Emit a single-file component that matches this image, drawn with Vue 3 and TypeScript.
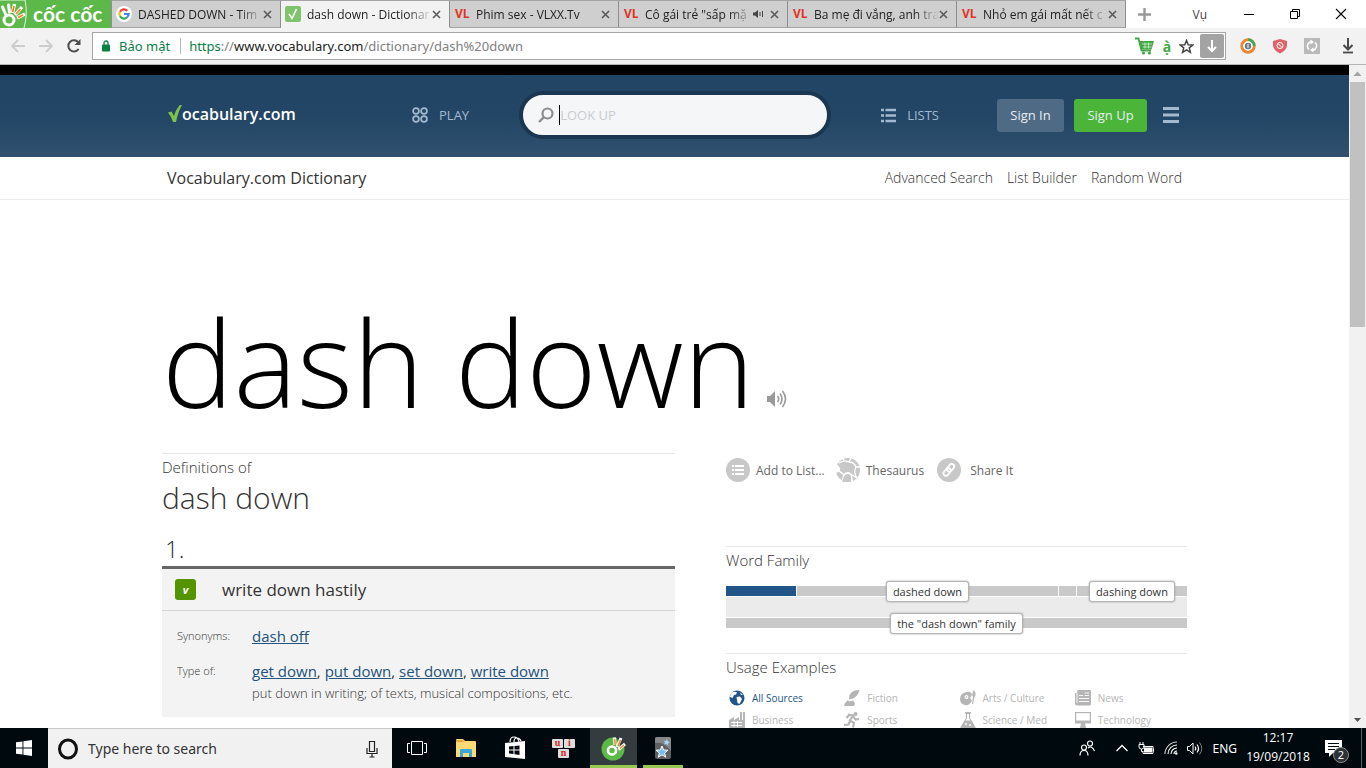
<script setup lang="ts">
interface Tab {
  title: string
  icon: 'google' | 'vocab' | 'vl'
  active?: boolean
  audible?: boolean
}

interface Source {
  label: string
  icon: string
  active?: boolean
}

const tabs: Tab[] = [
  { title: 'DASHED DOWN - Tim', icon: 'google' },
  { title: 'dash down - Dictionar', icon: 'vocab', active: true },
  { title: 'Phim sex - VLXX.Tv', icon: 'vl' },
  { title: 'Cô gái trẻ "sấp mặ', icon: 'vl', audible: true },
  { title: 'Ba mẹ đi vắng, anh tra', icon: 'vl' },
  { title: 'Nhỏ em gái mất nết c', icon: 'vl' },
]

const typeLinks: string[] = ['get down', 'put down', 'set down', 'write down']

const sources: Source[] = [
  { label: 'All Sources', icon: 'globe', active: true },
  { label: 'Fiction', icon: 'quill' },
  { label: 'Arts / Culture', icon: 'palette' },
  { label: 'News', icon: 'news' },
  { label: 'Business', icon: 'factory' },
  { label: 'Sports', icon: 'runner' },
  { label: 'Science / Med', icon: 'flask' },
  { label: 'Technology', icon: 'screen' },
]

const family = [
  { label: '', weight: 70, current: true },
  { label: 'dashed down', weight: 261, current: false },
  { label: '', weight: 17, current: false },
  { label: 'dashing down', weight: 110, current: false },
]
</script>

<template>
  <div class="desktop">
    <header class="tabstrip">
      <div class="brand">
        <svg width="28" height="28" viewBox="0 0 28 28" aria-hidden="true">
          <path d="M0 0H25Q28 14 24 28" fill="none" stroke="#e4f6de" stroke-width="1" />
          <circle cx="9" cy="20" r="5" fill="none" stroke="#fff" stroke-width="3" />
          <path d="M2.500 7 5.500 14M8.500 5 9.500 12" stroke="#fff" stroke-width="3" stroke-linecap="round" />
          <path d="M12.500 13 14.500 4M15 15 22 7M17 18 25 14" stroke="#fff" stroke-width="3.400" />
          <path d="M12.700 12 14 6M16 14 20.500 9M18 17.500 23 15" stroke="#f58229" stroke-width="1.800" />
        </svg>
        <span>cốc cốc</span>
      </div>
      <nav class="tabs" aria-label="Tabs">
        <div v-for="tab in tabs" :key="tab.title" class="tab" :class="{ active: tab.active }">
          <svg v-if="tab.icon === 'google'" width="16" height="16" viewBox="0 0 16 16" aria-hidden="true">
            <circle cx="8" cy="8" r="8" fill="#fff" />
            <g fill="none" stroke-width="2.200">
              <path d="M11.300 4.700A4.600 4.600 0 0 0 4 5.700" stroke="#ea4335" />
              <path d="M4 5.700A4.600 4.600 0 0 0 4 10.300" stroke="#fbbc05" />
              <path d="M4 10.300A4.600 4.600 0 0 0 10.900 11.500" stroke="#34a853" />
              <path d="M10.900 11.500A4.600 4.600 0 0 0 12.600 8H8" stroke="#4285f4" />
            </g>
          </svg>
          <svg v-else-if="tab.icon === 'vocab'" width="16" height="16" viewBox="0 0 16 16" aria-hidden="true">
            <rect width="16" height="16" rx="2" fill="#7fc46c" />
            <path d="M4 8 7 12.500 11.500 3" fill="none" stroke="#fff" stroke-width="1.600" />
          </svg>
          <span v-else class="vl" aria-hidden="true">VL</span>
          <a class="tab-title" href="#">{{ tab.title }}</a>
          <svg v-if="tab.audible" class="sound" width="11" height="10" viewBox="0 0 11 10" aria-hidden="true">
            <path d="M0 3.500H2L5 1V9L2 6.500H0Z" fill="#444" />
            <path d="M7 3V7M9.500 2V8" stroke="#444" stroke-width="1" />
          </svg>
          <button class="tab-close" aria-label="Close tab">
            <svg width="9" height="9" viewBox="0 0 9 9"><path d="M1 1 8 8M8 1 1 8" stroke="#5a5a5a" stroke-width="1.600" /></svg>
          </button>
        </div>
      </nav>
      <button class="new-tab" aria-label="New tab">
        <svg width="13" height="13" viewBox="0 0 13 13"><path d="M6.500 0V13M0 6.500H13" stroke="#999" stroke-width="2.400" /></svg>
      </button>
      <div class="window-tools">
        <span class="profile">Vụ</span>
        <button aria-label="Minimize"><svg width="12" height="12" viewBox="0 0 12 12"><path d="M1 6.500H11" stroke="#000" /></svg></button>
        <button aria-label="Restore"><svg width="12" height="12" viewBox="0 0 12 12"><path d="M1.500 3.500H8.500V10.500H1.500ZM3.500 3V1.500H10.500V8.500H9" fill="none" stroke="#000" /></svg></button>
        <button aria-label="Close"><svg width="12" height="12" viewBox="0 0 12 12"><path d="M1 1 11 11M11 1 1 11" stroke="#000" stroke-width="1.100" /></svg></button>
      </div>
    </header>

    <div class="toolbar">
      <div class="nav-buttons">
        <button aria-label="Back"><svg width="16" height="16" viewBox="0 0 16 16"><path d="M15 8H2M8 2 2 8 8 14" fill="none" stroke="#cdcdcd" stroke-width="1.800" /></svg></button>
        <button aria-label="Forward"><svg width="16" height="16" viewBox="0 0 16 16"><path d="M1 8H14M8 2 14 8 8 14" fill="none" stroke="#cdcdcd" stroke-width="1.800" /></svg></button>
        <button aria-label="Reload"><svg width="16" height="16" viewBox="0 0 16 16"><path d="M12.600 11A5.600 5.600 0 1 1 12.200 4.200" fill="none" stroke="#4d4d4d" stroke-width="2" /><path d="M14.500 1V7H8.500Z" fill="#4d4d4d" /></svg></button>
      </div>
      <div class="omnibox">
        <svg width="8" height="12" viewBox="0 0 8 12" aria-hidden="true"><path d="M2 5V3A2 2 0 0 1 6 3V5" fill="none" stroke="#0b8043" stroke-width="1.300" /><rect y="4.500" width="8" height="7" rx="1" fill="#0b8043" /></svg>
        <span class="secure">Bảo mật</span>
        <div class="url" role="textbox" aria-label="Address" contenteditable="true" spellcheck="false"><span class="scheme">https</span>://<span class="host">www.vocabulary.com</span>/dictionary/dash%20down</div>
        <button aria-label="Shopping"><svg width="20" height="18" viewBox="0 0 20 18"><path d="M0 1.500H3.500L6.500 13.500H16" fill="none" stroke="#43a847" stroke-width="1.800" /><path d="M4 4H19L16.500 12.500H6.500Z" fill="#43a847" /><path d="M7 7H17M8 10H16.500M10 5.500V11.500M13.500 5.500V11.500" stroke="#d8f0d5" stroke-width="0.800" /><circle cx="8.500" cy="16" r="1.600" fill="#43a847" /><circle cx="14.500" cy="16" r="1.600" fill="#43a847" /></svg></button>
        <button class="accent" aria-label="Vietnamese typing">ạ̀</button>
        <button aria-label="Bookmark"><svg width="15" height="15" viewBox="0 0 15 15"><path d="M7.500 1.500 9.200 5.700 13.800 6 10.300 8.900 11.400 13.300 7.500 10.900 3.600 13.300 4.700 8.900 1.200 6 5.800 5.700Z" fill="none" stroke="#444" stroke-width="1.500" /></svg></button>
        <button class="save" aria-label="Save media"><svg width="14" height="14" viewBox="0 0 14 14"><path d="M7 1V12M3 8 7 12 11 8" fill="none" stroke="#fff" stroke-width="2" /></svg></button>
      </div>
      <div class="extensions">
        <button aria-label="Savior"><svg width="16" height="16" viewBox="0 0 16 16"><circle cx="8" cy="8" r="6.200" fill="none" stroke="#f0852d" stroke-width="3" /><path d="M8 1.800A6.200 6.200 0 0 1 14.200 8" fill="none" stroke="#4aa657" stroke-width="3" /><circle cx="8" cy="8" r="4.700" fill="#fff" /><circle cx="8" cy="8" r="3.200" fill="#6f7b86" /><path d="M8 6V10" stroke="#fff" /></svg></button>
        <button aria-label="Ad shield"><svg width="14" height="16" viewBox="0 0 14 16"><path d="M7 1 14 3V8Q13 13 7 15.500 1 13 0 8V3Z" fill="#e0626b" /><circle cx="7" cy="7.500" r="3" fill="none" stroke="#fff" /><path d="M5 5.500 9 9.500" stroke="#fff" /></svg></button>
        <button aria-label="Sync"><svg width="16" height="16" viewBox="0 0 16 16"><rect width="16" height="16" fill="#b9b9b9" /><path d="M5 11.500A4.400 4.400 0 0 1 7 3.800M11 4.500A4.400 4.400 0 0 1 9 12.200" fill="none" stroke="#fff" stroke-width="1.500" /><path d="M6.500 1.500 10 4 6.500 6.500ZM9.500 9.500 6 12 9.500 14.500Z" fill="#fff" /></svg></button>
        <button class="downloads" aria-label="Downloads"><svg width="12" height="16" viewBox="0 0 12 16"><path d="M6 0V11M1.500 7 6 11.500 10.500 7" fill="none" stroke="#4a4a4a" stroke-width="2" /><path d="M1 14.500H11" stroke="#4a4a4a" stroke-width="1.800" /></svg></button>
      </div>
    </div>

    <div class="browser-body">
      <main class="page">
        <div class="site-header">
          <div class="container header-row">
            <a class="logo" href="#" aria-label="Vocabulary.com">
              <svg width="14" height="18" viewBox="0 0 14 18" aria-hidden="true"><path d="M0 7.500 3.500 6.500 6 11Q8 4 12 0H14Q10 7 8 17H5Q3 11 0 7.500Z" fill="#7cc24b" /></svg>
              <span>ocabulary.com</span>
            </a>
            <a class="menu-link play" href="#">
              <svg width="16" height="16" viewBox="0 0 16 16" aria-hidden="true"><g fill="none" stroke="#a3b9d0" stroke-width="1.700"><circle cx="4" cy="4" r="2.900" /><circle cx="12" cy="4" r="2.900" /><circle cx="4" cy="12" r="2.900" /><circle cx="12" cy="12" r="2.900" /></g></svg>
              PLAY
            </a>
            <label class="search">
              <svg width="16" height="16" viewBox="0 0 16 16" aria-hidden="true"><circle cx="9.500" cy="6.500" r="5" fill="none" stroke="#8c8c8c" stroke-width="2.200" /><path d="M6 10 1 15" stroke="#8c8c8c" stroke-width="2.400" /></svg>
              <span class="caret"></span>
              <input type="text" placeholder="LOOK UP" aria-label="Look up a word" />
            </label>
            <a class="menu-link lists" href="#">
              <svg width="15" height="15" viewBox="0 0 15 15" aria-hidden="true"><path d="M0 2H3M0 7.500H3M0 13H3M4.500 2H15M4.500 7.500H15M4.500 13H15" stroke="#a3b9d0" stroke-width="2.400" /></svg>
              LISTS
            </a>
            <button class="sign in">Sign In</button>
            <button class="sign up">Sign Up</button>
            <button class="burger" aria-label="Menu"><svg width="16" height="16" viewBox="0 0 16 16"><path d="M0 1.500H16M0 8H16M0 14.500H16" stroke="#a3b9d0" stroke-width="3" /></svg></button>
          </div>
        </div>

        <div class="subheader">
          <div class="container sub-row">
            <a class="section" href="#">Vocabulary.com Dictionary</a>
            <nav class="sub-links">
              <a href="#">Advanced Search</a>
              <a href="#">List Builder</a>
              <a href="#">Random Word</a>
            </nav>
          </div>
        </div>

        <div class="container">
          <h1 class="headword">
            dash down
            <button aria-label="Listen"><svg width="20" height="18" viewBox="0 0 20 18"><path d="M0 6H3L8 1V17L3 12H0Z" fill="#999" /><path d="M10.500 6Q13 9 10.500 12M13 3.500Q17 9 13 14.500M15.500 1Q21.500 9 15.500 17" fill="none" stroke="#999" stroke-width="1.600" /></svg></button>
          </h1>
          <div class="columns">
            <section class="definitions">
              <h2><span>Definitions of</span>dash down</h2>
              <h3 class="number">1.</h3>
              <div class="sense">
                <div class="sense-head">
                  <a class="pos" href="#" title="verb">v</a>
                  <span>write down hastily</span>
                </div>
                <dl class="instances">
                  <dt>Synonyms:</dt>
                  <dd><a href="#">dash off</a></dd>
                  <dt>Type of:</dt>
                  <dd>
                    <template v-for="(link, i) in typeLinks" :key="link"><span v-if="i > 0">, </span><a href="#">{{ link }}</a></template>
                    <p>put down in writing; of texts, musical compositions, etc.</p>
                  </dd>
                </dl>
              </div>
            </section>

            <aside class="side">
              <div class="actions">
                <a href="#">
                  <svg width="24" height="24" viewBox="0 0 24 24" aria-hidden="true"><circle cx="12" cy="12" r="12" fill="#c8c8c8" /><path d="M6 8H8M6 12H8M6 16H8M9 8H18M9 12H18M9 16H18" stroke="#fff" stroke-width="2" /></svg>
                  Add to List...
                </a>
                <a href="#">
                  <svg width="24" height="24" viewBox="0 0 24 24" aria-hidden="true"><circle cx="12" cy="12" r="12" fill="#c8c8c8" /><path d="M0 6Q5 9 4 13L0 15V6ZM7 16Q12 12 16 16L17 24H5Q7 20 7 16Z" fill="#fff" /><path d="M8 18Q12 14 15 18V24H6Z" fill="#c8c8c8" /><g fill="none" stroke="#fff" stroke-width="1.300"><path d="M3 5Q8 2 13 4L15 0M13 4Q18 4 20 9 17 15 21 20M20 9 24 9M0 12Q4 13 7 16M7 0 8 3M16 17 21 20" /></g></svg>
                  Thesaurus
                </a>
                <a href="#" class="share">
                  <svg width="24" height="24" viewBox="0 0 24 24" aria-hidden="true"><circle cx="12" cy="12" r="12" fill="#c8c8c8" /><g fill="none" stroke="#fff" stroke-width="1.800" transform="rotate(-50 12 12)"><rect x="5" y="9.300" width="8.500" height="5" rx="2.500" /><rect x="10.500" y="9.300" width="8.500" height="5" rx="2.500" /></g></svg>
                  Share It
                </a>
              </div>

              <section class="word-family">
                <h4>Word Family</h4>
                <div class="bar">
                  <div v-for="(part, i) in family" :key="i" class="segment" :class="{ current: part.current }" :style="{ flexGrow: part.weight }">
                    <a v-if="part.label" class="pill" href="#">{{ part.label }}</a>
                  </div>
                </div>
                <div class="spacer"></div>
                <div class="bar"><div class="segment whole"><a class="pill" href="#">the "dash down" family</a></div></div>
              </section>

              <section class="usage">
                <h4>Usage Examples</h4>
                <div class="sources">
                  <a v-for="source in sources" :key="source.label" href="#" :class="{ selected: source.active }">
                    <svg width="16" height="16" viewBox="0 0 16 16" fill="currentColor" aria-hidden="true">
                      <template v-if="source.icon === 'globe'"><circle cx="8" cy="8" r="7.500" /><path d="M3 2.500Q6 1 8 2.500L7 4.500 5 5 3.500 8 1 7Q1 4 3 2.500ZM7.500 7 11 6.500 13 9 10.500 14 8.500 13ZM11 2.500 14 5 12 5Z" fill="#fff" /></template>
                      <path v-else-if="source.icon === 'quill'" d="M15.500 0Q8 0 5.500 5L5 9.500 9 8.500Q14 6 15.500 0ZM0 16Q1 12 4 10L5 11.500 9 10.500 11 13.500 10 16Z" />
                      <template v-else-if="source.icon === 'palette'"><path d="M7 2Q11 1 12 5L10 8 12 11Q9 16 5 15 0 14 0 9 0 3 7 2Z" /><circle cx="6.500" cy="7" r="2" fill="#fff" /><circle cx="6.500" cy="7" r="0.800" /><path d="M14 0Q17 4 14.500 7L13 14H12L13 7Q11 4 14 0Z" /></template>
                      <template v-else-if="source.icon === 'news'"><path d="M2.500 0H15Q16 0 16 1V14Q16 15.500 14.500 15.500H2Q0 15.500 0 13.500V3H2Z" /><path d="M4 5.500H8M9.500 3H14M9.500 5.500H14M4 8.500H14M4 11.500H14M2 3V13" stroke="#fff" stroke-width="0.900" /></template>
                      <template v-else-if="source.icon === 'factory'"><path d="M0 16V8L5 5V8L10 5V8H11V0H13V8H14V0H16V16Z" /><path d="M2 10.500H13M2 13.500H13M5 9V15M8.500 9V15" stroke="#fff" stroke-width="0.900" /></template>
                      <template v-else-if="source.icon === 'runner'"><circle cx="11.500" cy="2" r="2" /><path d="M4 2.500 9 3.500 6 8.500 10 11 9 15.500M9 4 11.500 7.500 15 7M6 9 4.500 12.500 0 13M5 3 2.500 6" fill="none" stroke="currentColor" stroke-width="2.100" /></template>
                      <template v-else-if="source.icon === 'flask'"><path d="M5 0H11V1.500H10V6L15.500 15Q16 16 15 16H1Q0 16 0.500 15L6 6V1.500H5Z" /><path d="M7 2H9V6L10.500 8.500H5.500L7 6Z" fill="#fff" /><circle cx="6" cy="12" r="0.900" fill="#fff" /><circle cx="10" cy="13" r="0.900" fill="#fff" /></template>
                      <template v-else><path d="M0 0H16V11.500H10L11 16H5L6 11.500H0Z" /><path d="M1.200 1.200H14.800V8.500H1.200Z" fill="#fff" /></template>
                    </svg>
                    {{ source.label }}
                  </a>
                </div>
              </section>
            </aside>
          </div>
        </div>
      </main>
      <div class="scrollbar" aria-hidden="true">
        <svg width="17" height="17" viewBox="0 0 17 17"><path d="M4.500 11 8.500 6.500 12.500 11Z" fill="#a3a3a3" /></svg>
        <div class="track"><div class="thumb"></div></div>
        <svg width="17" height="17" viewBox="0 0 17 17"><path d="M5 7H12L8.500 11Z" fill="#505050" /></svg>
      </div>
    </div>

    <footer class="taskbar">
      <button class="start" aria-label="Start"><svg width="16" height="16" viewBox="0 0 16 16"><path d="M0 2.300 6.500 1.400V7.600H0ZM7.400 1.300 16 0V7.600H7.400ZM0 8.400H6.500V14.600L0 13.700ZM7.400 8.400H16V16L7.400 14.700Z" fill="#fff" /></svg></button>
      <label class="task-search">
        <svg width="20" height="22" viewBox="0 0 20 22" aria-hidden="true"><ellipse cx="10" cy="11" rx="8.500" ry="9" fill="none" stroke="#111" stroke-width="3" /></svg>
        <input type="text" placeholder="Type here to search" aria-label="Type here to search" />
        <svg width="12" height="18" viewBox="0 0 12 18" aria-hidden="true"><path d="M3.500 1.500H8.500V11.500H3.500ZM1 8V13.500H11V8M6 14V16.500M3.500 17H8.500" fill="none" stroke="#222" stroke-width="1.200" /></svg>
      </label>
      <div class="apps">
        <button aria-label="Task view"><svg width="20" height="16" viewBox="0 0 20 16"><path d="M4.500 1.500H15.500V14.500H4.500ZM3 3.500H0.500V12.500H3M17 3.500H19.500V12.500H17" fill="none" stroke="#fff" /></svg></button>
        <button aria-label="File Explorer"><svg width="22" height="20" viewBox="0 0 22 20"><path d="M1 2Q1 1 2 1H8L10 3H20Q21 3 21 4V19H1Z" fill="#fbd975" /><path d="M1 2H8L9 4H1Z" fill="#e8a93a" /><path d="M5 19V12Q5 11 6 11H16Q17 11 17 12V19H14V15H8V19Z" fill="#3aa7dc" /></svg></button>
        <button aria-label="Store"><svg width="22" height="24" viewBox="0 0 22 24"><path d="M1 7 21 5V23L1 21Z" fill="#fff" /><path d="M6 6Q6 1 10 1T15 6M10 6Q10 2 12.500 2 16 2 17 5" fill="none" stroke="#fff" stroke-width="1.200" /><path d="M5 10.500 9.500 10V13.500H5ZM10.500 10 15.500 9.500V13.500H10.500ZM5 14.500H9.500V18L5 17.500ZM10.500 14.500H15.500V19L10.500 18.200Z" fill="#00090d" /></svg></button>
        <button class="keys" aria-label="UniKey"><b>u</b><b>i</b><b>n</b></button>
        <button class="running" aria-label="Cốc Cốc"><svg width="25" height="25" viewBox="0 0 25 25"><circle cx="12" cy="13" r="11.500" fill="#5cb848" /><path d="M15 0H25V12L19 10Z" fill="#343c40" /><circle cx="11" cy="14.500" r="4" fill="none" stroke="#fff" stroke-width="2.600" /><path d="M13.500 1.500 14 9M16 11 20 2M17.500 13.500 24 8" stroke="#fff" stroke-width="3" /><path d="M13.700 3 14.200 9M17 10 19.500 4M19 12.500 23 9" stroke="#f58229" stroke-width="1.500" /></svg></button>
        <button class="anki" aria-label="Anki"><svg width="18" height="22" viewBox="0 0 18 22"><rect x="1" width="16" height="22" rx="2" fill="#5e6062" /><path d="M1 6Q10 4 17 14V2Q17 0 15 0H3Q1 0 1 2Z" fill="#85888a" /><path d="M8 9 9.600 13 14 13.200 10.600 16 11.800 20.200 8 17.800 4.200 20.200 5.400 16 2 13.200 6.400 13Z" fill="#78bdf0" stroke="#fff" /><path d="M13 2 13.800 4.200 16 5 14 6.500 14 8.500 12.300 7 10 7.500 11 5.500 10 3.500 12 4Z" fill="#a9d5f5" /></svg></button>
      </div>
      <div class="tray">
        <button aria-label="People"><svg width="16" height="16" viewBox="0 0 16 16"><g fill="none" stroke="#fff" stroke-width="1.200"><circle cx="5" cy="7.500" r="2.500" /><path d="M1 15.500Q1 10.500 5 10.500T9 15.500" /><circle cx="11" cy="3.500" r="2.500" /><path d="M9 8Q13 5 15.500 11" /></g></svg></button>
        <button aria-label="Show hidden icons"><svg width="14" height="8" viewBox="0 0 14 8"><path d="M1.500 7 7 1.500 12.500 7" fill="none" stroke="#fff" stroke-width="1.300" /></svg></button>
        <button aria-label="Battery"><svg width="17" height="13" viewBox="0 0 17 13"><path d="M5 4.500H15V11.500H5V9M15.500 6.500V9.500M1 2.500H6V5Q6 7 3.500 7T1 5ZM2 0V2M5 0V2M3.500 7V9.500H5" fill="none" stroke="#fff" /><rect x="6" y="5.500" width="8" height="5" fill="#fff" /></svg></button>
        <button aria-label="Network"><svg width="14" height="14" viewBox="0 0 14 14"><g fill="none" stroke="#ccc" stroke-width="1.100"><path d="M1 13A12 12 0 0 1 13 1" /><path d="M4 13A9 9 0 0 1 13 4M7 13A6 6 0 0 1 13 7M10 13A3 3 0 0 1 13 10" stroke="#fff" /></g><circle cx="12.300" cy="12.500" r="1.200" fill="#fff" /></svg></button>
        <button aria-label="Volume"><svg width="16" height="13" viewBox="0 0 16 13"><path d="M0.500 4.500H2.500L6 1V12L2.500 8.500H0.500Z" fill="none" stroke="#fff" /><path d="M8 4.500Q9.500 6.500 8 8.500M10 2.500Q13 6.500 10 10.500" fill="none" stroke="#fff" stroke-width="1.200" /><path d="M12.500 0.500Q17 6.500 12.500 12.500" fill="none" stroke="#7a8588" /></svg></button>
        <button class="language">ENG</button>
        <button class="clock"><time>12:17</time><time>19/09/2018</time></button>
        <button class="notices" aria-label="Notifications, 2 new">
          <svg width="17" height="17" viewBox="0 0 17 17"><path d="M0 0H17V13H8L4 17V13H0Z" fill="#fff" /><path d="M3 3.500H14M3 6.500H14M3 9.500H10" stroke="#00090d" /></svg>
          <span>2</span>
        </button>
        <i class="peek"></i>
      </div>
    </footer>
  </div>
</template>

<style>
html,
body {
  margin: 0;
  overflow: hidden;
}
</style>

<style scoped>
.desktop,
.desktop * {
  box-sizing: border-box;
}
.desktop {
  display: flex;
  flex-direction: column;
  height: 100vh;
  overflow: hidden;
  background: #fff;
  font-family: 'Open Sans', 'Noto Sans', sans-serif;
}
button {
  display: inline-flex;
  align-items: center;
  justify-content: center;
  padding: 0;
  border: 0;
  background: none;
  color: inherit;
  font: inherit;
}
input {
  min-width: 0;
  padding: 0;
  border: 0;
  outline: 0;
  background: none;
  font: inherit;
}
a {
  color: inherit;
  text-decoration: none;
}
svg {
  flex: none;
}
h1,
h2,
h3,
h4,
p,
dl,
dd {
  margin: 0;
  font-weight: 300;
}

/* Tab strip */
.tabstrip {
  display: flex;
  flex: none;
  height: 28px;
}
.brand {
  display: flex;
  flex: none;
  align-items: center;
  gap: 5px;
  width: 111px;
  background: #5cb848;
  color: #fff;
  font: 700 21px/24px Lato, sans-serif;
  white-space: nowrap;
}
.tabs {
  display: flex;
  flex: 0 1 1015px;
  min-width: 0;
  border-top: 1px solid #a3a3a3;
  border-left: 1px solid #8e8e8e;
}
.tab {
  display: flex;
  flex: 1 1 0;
  align-items: center;
  min-width: 0;
  padding: 0 8px 0 4px;
  border-right: 1px solid #8e8e8e;
  border-bottom: 1px solid #a3a3a3;
  background: #cfcfcf;
  color: #222;
  font-size: 12px;
}
.tab.active {
  border-bottom-color: #f2f2f2;
  background: #f2f2f2;
}
.vl {
  width: 16px;
  padding-left: 1px;
  color: #e03427;
  font: 700 12px/16px 'Open Sans', sans-serif;
}
.tab-title {
  flex: 1;
  min-width: 0;
  padding-left: 6px;
  overflow: hidden;
  white-space: nowrap;
  mask-image: linear-gradient(to right, #000 calc(100% - 24px), transparent);
}
.sound {
  margin-right: 6px;
}
.tab-close {
  width: 9px;
  height: 16px;
}
.new-tab {
  flex: none;
  width: 36px;
}
.window-tools {
  display: flex;
  flex: none;
  align-items: center;
  margin-left: auto;
  font-size: 11px;
}
.window-tools button {
  width: 46px;
  height: 28px;
}
.window-tools .profile {
  margin-right: 19px;
  color: #444;
  font-size: 12px;
}
.window-tools button:last-child {
  margin-right: 2px;
}

/* Toolbar */
.toolbar {
  display: flex;
  flex: none;
  align-items: center;
  height: 37px;
  border-bottom: 1px solid #b4b4b4;
  background: #f2f2f2;
  font-family: 'Noto Sans', 'Open Sans', sans-serif;
}
.nav-buttons {
  display: flex;
  gap: 12px;
  padding: 0 10px;
}
.omnibox {
  display: flex;
  flex: 1;
  align-items: center;
  min-width: 0;
  height: 28px;
  padding: 0 1px 0 9px;
  border: 1px solid #a6a6a6;
  background: #fff;
  font-size: 14px;
}
.secure {
  margin-left: 9px;
  padding-right: 10px;
  border-right: 1px solid #b9b9b9;
  color: #0b8043;
  font-size: 13px;
  line-height: 16px;
}
.url {
  flex: 1;
  min-width: 0;
  margin-left: 8px;
  overflow: hidden;
  color: #808080;
  font-size: 13px;
  white-space: nowrap;
}
.scheme {
  color: #0b8043;
}
.host {
  color: #222;
}
.accent {
  width: 24px;
  color: #43a847;
  font-weight: 700;
}
.save {
  width: 24px;
  height: 24px;
  margin-left: 6px;
  border-radius: 2px;
  background: #a3a3a3;
}
.extensions {
  display: flex;
  align-items: center;
  gap: 17px;
  padding: 0 12px 0 14px;
}
.downloads {
  margin-left: 5px;
}

/* Page */
.browser-body {
  display: flex;
  flex: 1;
  min-height: 0;
}
.page {
  flex: 1;
  min-width: 0;
  overflow: hidden;
}
.container {
  width: 76%;
  max-width: 1025px;
  margin: 0 auto;
}
.site-header {
  border-top: 10px solid #000;
  background: linear-gradient(#224566 0%, #234666 50%, #30506e 100%);
}
.header-row {
  display: flex;
  align-items: center;
  height: 82px;
  padding: 0 8px 2px 6px;
  color: #a3b9d0;
  font-size: 13px;
}
.logo {
  display: flex;
  align-items: center;
  padding-bottom: 2px;
  color: #fff;
  font-size: 16px;
  font-weight: 600;
}
.menu-link {
  display: flex;
  align-items: center;
  gap: 11px;
}
.play {
  margin-left: auto;
}
.search {
  display: flex;
  flex: 0 1 312px;
  align-items: center;
  min-width: 0;
  height: 48px;
  margin: 0 50px;
  padding: 0 15px;
  border: 4px solid #1a3650;
  border-radius: 24px;
  background: #f4f6f8;
}
.search input {
  flex: 1;
}
.search input::placeholder {
  color: #c9ccd0;
  opacity: 1;
}
.caret {
  width: 1px;
  height: 20px;
  margin-left: 5px;
  background: #000;
}
.sign {
  height: 33px;
  border-radius: 3px;
  color: #e8edf2;
}
.sign.in {
  width: 67px;
  margin-left: 58px;
  background: #4f6a84;
}
.sign.up {
  width: 73px;
  margin-left: 10px;
  background: #4bb53a;
}
.burger {
  margin-left: 16px;
}
.subheader {
  border-bottom: 1px solid #ececec;
}
.sub-row {
  display: flex;
  align-items: center;
  justify-content: space-between;
  height: 42px;
  padding: 0 5px;
  color: #333;
}
.section {
  font-size: 16px;
}
.sub-links {
  display: flex;
  gap: 14px;
  padding-bottom: 2px;
  font-size: 14px;
  font-weight: 300;
}
.headword {
  display: flex;
  align-items: flex-end;
  gap: 13px;
  margin: 102px 0 31px;
  color: #000;
  font-size: 120px;
  line-height: 120px;
}
.headword button {
  padding-bottom: 14px;
}
.columns {
  display: flex;
  gap: 51px;
}
.definitions {
  flex: 513 1 0;
  min-width: 0;
  padding-top: 3px;
  border-top: 1px solid #e6e6e6;
  color: #333;
}
.definitions h2 {
  font-size: 30px;
  line-height: 41px;
}
.definitions h2 span {
  display: block;
  font-size: 15px;
  line-height: 20px;
}
.number {
  margin-top: 16px;
  padding: 0 3px 2px;
  font-size: 24px;
  line-height: 30px;
}
.sense {
  border-top: 3px solid #666;
  background: #f3f3f3;
}
.sense-head {
  display: flex;
  align-items: center;
  gap: 26px;
  height: 42px;
  padding: 0 13px;
  border-bottom: 1px solid #d6d6d6;
  font-size: 17px;
}
.pos {
  width: 21px;
  height: 21px;
  border-radius: 3px;
  background: #549400;
  color: #fff;
  font-size: 11px;
  font-style: italic;
  font-weight: 700;
  line-height: 21px;
  text-align: center;
}
.instances {
  display: grid;
  grid-template-columns: 75px 1fr;
  row-gap: 13px;
  padding: 14px 15px 13px;
  font-size: 15px;
  line-height: 22px;
}
.instances dt {
  font-size: 11px;
  font-weight: 300;
}
.instances dd {
  font-weight: 400;
}
.instances a {
  color: #23527c;
  text-decoration: underline;
}
.instances p {
  font-size: 13px;
}

.side {
  flex: 461 1 0;
  min-width: 0;
  padding-top: 5px;
  color: #333;
}
.actions {
  display: flex;
  gap: 11px;
  color: #666;
  font-size: 12px;
}
.actions a {
  display: flex;
  align-items: center;
  gap: 6px;
}
.actions .share {
  gap: 9px;
  margin-left: 2px;
}
.side h4 {
  font-size: 15px;
  line-height: 20px;
}
.word-family {
  margin-top: 64px;
  padding-top: 3px;
  border-top: 1px solid #e6e6e6;
}
.bar {
  display: flex;
  gap: 1px;
  height: 10px;
  margin-top: 16px;
}
.segment {
  display: flex;
  flex: 1 1 0;
  align-items: center;
  justify-content: center;
  background: #c9c9c9;
}
.segment.current {
  background: #225588;
}
.pill {
  flex: none;
  padding: 0 6px;
  border: 1px solid #b4b4b4;
  border-radius: 3px;
  background: #fff;
  box-shadow: 0 0 2px #999;
  color: #333;
  font-size: 11px;
  line-height: 19px;
  position: relative;
}
.spacer {
  height: 20px;
  margin-top: 1px;
  background: #ebebeb;
}
.spacer + .bar {
  margin-top: 1px;
}
.usage {
  margin-top: 25px;
  padding-top: 3px;
  border-top: 1px solid #e6e6e6;
}
.sources {
  display: grid;
  grid-template-columns: repeat(4, 1fr);
  margin: 10px -3px 0 3px;
  color: #b5b5b5;
  font-size: 10px;
  line-height: 22px;
}
.sources a {
  display: flex;
  align-items: center;
  gap: 7px;
  white-space: nowrap;
}
.sources .selected {
  color: #225588;
}

.scrollbar {
  display: flex;
  flex: none;
  flex-direction: column;
  width: 17px;
  background: #f1f1f1;
}
.track {
  flex: 1;
  padding: 0 1px;
}
.thumb {
  height: 39%;
  background: #c1c1c1;
}

/* Taskbar */
.taskbar {
  display: flex;
  flex: none;
  height: 40px;
  background: #00090d;
  color: #fff;
  font-family: 'Noto Sans', 'Open Sans', sans-serif;
}
.start {
  width: 48px;
}
.task-search {
  display: flex;
  flex: 0 1 344px;
  align-items: center;
  gap: 10px;
  min-width: 0;
  padding: 0 14px 0 10px;
  border-top: 1px solid #c8c8c8;
  background: #f1f1f1;
  font-size: 14px;
}
.task-search input {
  flex: 1;
}
.task-search input::placeholder {
  color: #333;
  opacity: 1;
}
.apps {
  display: flex;
}
.apps button {
  width: 49px;
}
.apps .running {
  width: 47px;
  margin-left: 2px;
  border-top: 3px solid transparent;
  border-bottom: 3px solid #96c950;
  background: #343c40;
}
.apps .anki {
  width: 40px;
  margin-left: 6px;
  border-top: 3px solid transparent;
  border-bottom: 3px solid #96c950;
}
.keys {
  flex-wrap: wrap;
  align-content: center;
  gap: 1px;
  padding: 0 12px;
}
.keys b {
  width: 11px;
  height: 9px;
  border-radius: 1px;
  background: #ddd;
  color: #d22;
  font: 700 10px/8px 'Liberation Serif', serif;
}
.tray {
  display: flex;
  align-items: center;
  margin-left: auto;
  font-size: 12px;
}
.tray button {
  height: 40px;
  margin-right: 9px;
}
.tray button:first-child {
  margin-right: 20px;
}
.tray .clock {
  flex-direction: column;
  width: 64px;
  margin-right: 15px;
  padding-bottom: 2px;
  font-family: 'Open Sans', 'Noto Sans', sans-serif;
  line-height: 19px;
}
.tray .notices {
  position: relative;
  width: 24px;
  margin-right: 12px;
  justify-content: flex-start;
}
.notices span {
  position: absolute;
  top: 19px;
  left: 8px;
  width: 16px;
  height: 16px;
  border: 1px solid #8a8f91;
  border-radius: 8px;
  background: #2d3235;
  font-size: 11px;
  line-height: 14px;
}
.peek {
  width: 5px;
  height: 40px;
  border-left: 1px solid #5a6164;
}
</style>
